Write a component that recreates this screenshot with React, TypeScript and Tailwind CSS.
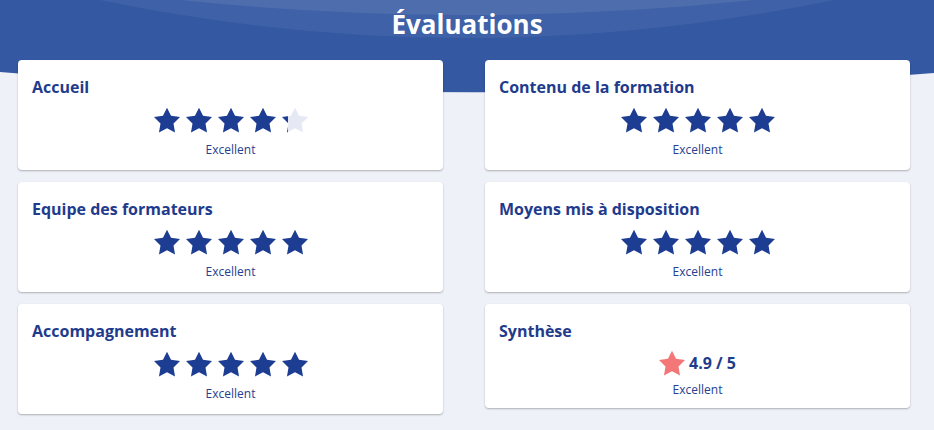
import React, { useId } from "react";

const STAR = "M12 2l3.09 6.26L22 9.27l-5 4.87 1.18 6.88L12 17.77l-6.18 3.25L7 14.14 2 9.27l6.91-1.01L12 2z";

function Star({ fill = 1, color = "#1d3d92", empty = "#e4e9f3" }: { fill?: number; color?: string; empty?: string }) {
  const id = useId().replace(/:/g, "");
  return (
    <svg width="26" height="26" viewBox="2 1.5 20 20" aria-hidden="true">
      <defs>
        <linearGradient id={`g${id}`} x1="2" x2="22" y1="0" y2="0" gradientUnits="userSpaceOnUse">
          <stop offset={fill} stopColor={color} />
          <stop offset={fill} stopColor={empty} />
        </linearGradient>
      </defs>
      <path d={STAR} fill={`url(#g${id})`} />
    </svg>
  );
}

function Stars({ value }: { value: number }) {
  return (
    <div className="mt-[8px] flex h-[26px] justify-center gap-[6px]">
      {[0, 1, 2, 3, 4].map((i) => (
        <Star key={i} fill={Math.max(0, Math.min(1, value - i))} />
      ))}
    </div>
  );
}

function Card({ title, value }: { title: string; value: number }) {
  return (
    <div className="rounded-[4px] bg-white px-[14px] pb-[12px] pt-[15px] shadow-[0_1px_2px_rgba(0,0,0,0.28)]">
      <h2 className="text-[16px] font-bold leading-[24px] text-[#1f3b8c]">{title}</h2>
      <Stars value={value} />
      <p className="mt-[9px] text-center text-[12px] leading-[16px] text-[#24418f]">Excellent</p>
    </div>
  );
}

function SummaryCard() {
  return (
    <div className="rounded-[4px] bg-white px-[14px] pb-[10px] pt-[15px] shadow-[0_1px_2px_rgba(0,0,0,0.28)]">
      <h2 className="text-[16px] font-bold leading-[24px] text-[#1f3b8c]">Synthèse</h2>
      <div className="mt-[7px] flex h-[25px] items-center justify-center gap-[4px]">
        <Star fill={1} color="#f47778" />
        <span className="text-[16px] font-bold leading-[24px] text-[#1f3b8c]">4.9 / 5</span>
      </div>
      <p className="mt-[7px] text-center text-[12px] leading-[16px] text-[#24418f]">Excellent</p>
    </div>
  );
}

export default function App() {
  return (
    <div
      className="relative min-h-[430px] w-full overflow-hidden bg-[#eef1f7]"
      style={{ fontFamily: '"Open Sans", "Liberation Sans", sans-serif' }}
    >
      <svg
        className="absolute left-0 top-0 h-[100px] w-full"
        viewBox="0 0 934 100"
        preserveAspectRatio="none"
        aria-hidden="true"
      >
        <path d="M0 0H934V73Q467 112 0 72Z" fill="#3458a2" />
        <path d="M100 0Q467 76 834 0Z" fill="#ffffff" fillOpacity="0.06" />
        <path d="M180 0Q467 30 754 0Z" fill="#ffffff" fillOpacity="0.08" />
      </svg>
      <div className="relative">
        <h1 className="pt-[6px] text-center text-[26px] font-bold leading-[36px] text-white">Évaluations</h1>
        <div className="mt-[18px] grid grid-cols-[425px_425px] gap-x-[42px] pl-[18px]">
          <div className="flex flex-col gap-[12px]">
            <Card title="Accueil" value={4.25} />
            <Card title="Equipe des formateurs" value={5} />
            <Card title="Accompagnement" value={5} />
          </div>
          <div className="flex flex-col gap-[12px]">
            <Card title="Contenu de la formation" value={5} />
            <Card title="Moyens mis à disposition" value={5} />
            <SummaryCard />
          </div>
        </div>
      </div>
    </div>
  );
}
